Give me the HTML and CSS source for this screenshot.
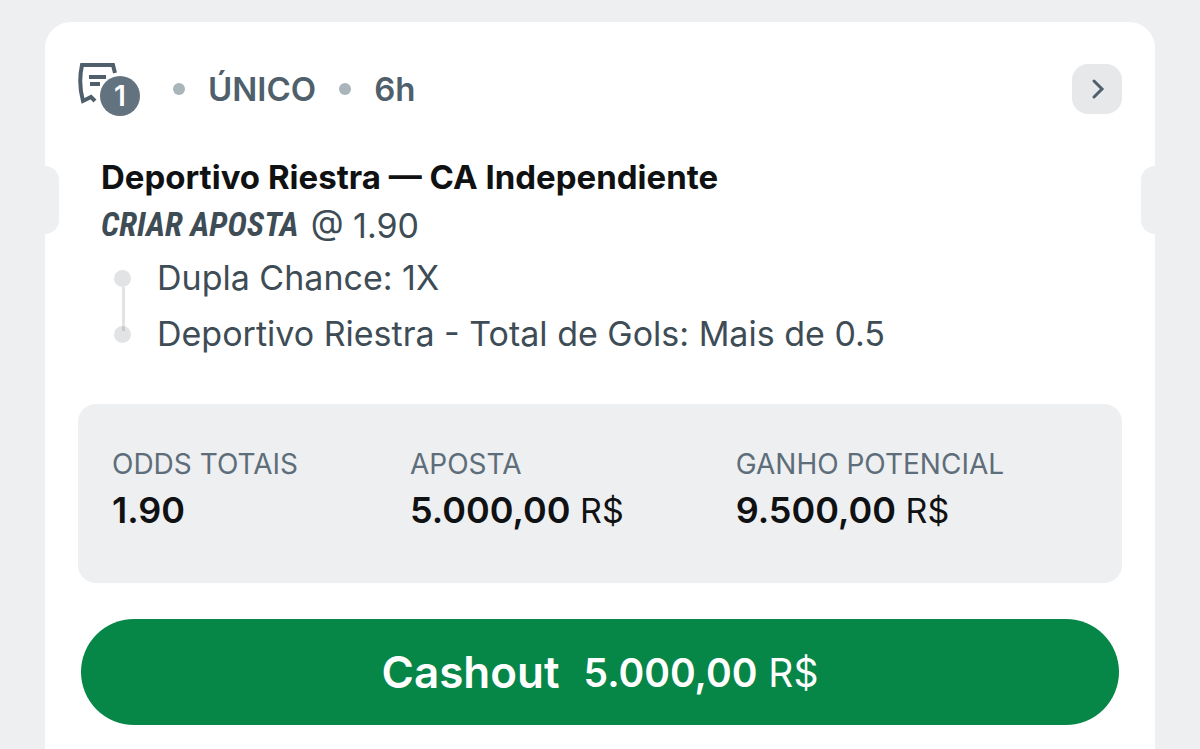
FILE: index.html
```
<!DOCTYPE html>
<html lang="pt-BR">
<head>
<meta charset="UTF-8" />
<meta name="viewport" content="width=device-width, initial-scale=1" />
<title>Aposta</title>
<link rel="stylesheet" href="styles.css">
</head>
<body>

<main class="ticket">
  <span class="notch notch-left"></span>
  <span class="notch notch-right"></span>

  <header class="ticket-head">
    <div class="slip">
      <svg class="slip-icon" viewBox="0 0 40 44" aria-hidden="true">
        <path d="M37 11L35 3H4Q0 21 5 39L13 35L17 39M11 15H28M12 22H22" />
      </svg>
      <span class="slip-count">1</span>
    </div>
    <span class="dot"></span>
    <span class="meta">ÚNICO</span>
    <span class="dot"></span>
    <span class="meta">6h</span>
    <button class="open-btn" type="button" aria-label="Abrir aposta">
      <svg viewBox="0 0 24 24" aria-hidden="true"><path d="M9 4l8 8-8 8" /></svg>
    </button>
  </header>

  <section class="event">
    <h1>Deportivo Riestra — CA Independiente</h1>
    <p class="builder"><strong>CRIAR APOSTA</strong> <span>@ 1.90</span></p>
    <ul class="legs">
      <li>Dupla Chance: 1X</li>
      <li>Deportivo Riestra - Total de Gols: Mais de 0.5</li>
    </ul>
  </section>

  <dl class="summary">
    <div>
      <dt>ODDS TOTAIS</dt>
      <dd><b>1.90</b></dd>
    </div>
    <div>
      <dt>APOSTA</dt>
      <dd><b>5.000,00</b> R$</dd>
    </div>
    <div>
      <dt>GANHO POTENCIAL</dt>
      <dd><b>9.500,00</b> R$</dd>
    </div>
  </dl>

  <button class="cashout" type="button">
    <span class="cashout-label">Cashout</span>
    <span class="cashout-value"><b>5.000,00</b> R$</span>
  </button>
</main>

</body>
</html>
```
FILE: styles.css
```
* { box-sizing: border-box; }
body {
  margin: 0;
  padding: 22px 45px 0;
  background: #eeeff1;
  color: #0f1113;
  font-family: Inter, "Liberation Sans", sans-serif;
}
.ticket {
  position: relative;
  min-height: calc(100vh - 22px);
  padding: 41px 33px 24px;
  background: #fff;
  border-radius: 26px 26px 0 0;
}
.notch {
  position: absolute;
  top: 144px;
  width: 14px;
  height: 68px;
  background: #eeeff1;
}
.notch-left {
  left: 0;
  border-radius: 0 14px 14px 0;
}
.notch-right {
  right: 0;
  border-radius: 14px 0 0 14px;
}
.ticket-head {
  display: flex;
  align-items: center;
  height: 52px;
  color: #4f5f6b;
}
.slip {
  position: relative;
  width: 62px;
  height: 54px;
}
.slip-icon {
  width: 40px;
  height: 44px;
  fill: none;
  stroke: #4f5f6b;
  stroke-width: 4;
}
.slip-count {
  position: absolute;
  right: 0;
  bottom: 0;
  width: 40px;
  height: 40px;
  border-radius: 50%;
  background: #62727f;
  box-shadow: 0 0 0 2px #fff;
  color: #fff;
  font-size: 28px;
  font-weight: 600;
  line-height: 40px;
  text-align: center;
}
.dot {
  width: 12px;
  height: 12px;
  margin: 0 23px 0 33px;
  border-radius: 50%;
  background: #aab4bb;
}
.meta {
  font-size: 33px;
  font-weight: 600;
}
.meta + .dot { margin: 0 23px; }
.open-btn {
  display: grid;
  place-items: center;
  width: 50px;
  height: 50px;
  margin-left: auto;
  padding: 0;
  border: 0;
  border-radius: 16px;
  background: #e6e8ea;
  cursor: pointer;
}
.open-btn svg {
  width: 24px;
  height: 24px;
  fill: none;
  stroke: #4f5f6b;
  stroke-width: 3;
  stroke-linecap: round;
}
.event { padding: 38px 23px 0; }
h1 {
  margin: 0;
  font-size: 33px;
  font-weight: 650;
  line-height: 48px;
}
.builder {
  display: flex;
  gap: 12px;
  margin: 0;
  color: #3e4c56;
  font-size: 34px;
  line-height: 48px;
}
.builder strong {
  font-family: "Roboto Condensed", "Liberation Sans Narrow", sans-serif;
  font-size: 33px;
  font-style: italic;
}
.builder span { padding-top: 1px; }
.legs {
  margin: 0;
  padding: 0;
  list-style: none;
}
.legs li {
  position: relative;
  padding-left: 56px;
  color: #3e4c56;
  font-size: 34px;
  line-height: 56px;
}
.legs li::before {
  content: "";
  position: absolute;
  left: 13px;
  top: 20px;
  width: 17px;
  height: 17px;
  border-radius: 50%;
  background: #e1e3e4;
}
.legs li:first-child::after {
  content: "";
  position: absolute;
  z-index: 1;
  left: 21px;
  top: 37px;
  width: 3px;
  height: 44px;
  background: rgba(60, 70, 75, 0.15);
}
.summary {
  display: flex;
  gap: 112px;
  margin: 42px 0 0;
  padding: 40px 34px 46px;
  border-radius: 18px;
  background: #eeeff1;
}
dt {
  color: #5d6d79;
  font-size: 28px;
  line-height: 40px;
}
dd {
  margin: 0;
  font-size: 34px;
  line-height: 52px;
}
dd b {
  font-size: 36px;
  font-weight: 600;
}
.cashout {
  display: flex;
  align-items: center;
  justify-content: center;
  gap: 24px;
  width: calc(100% - 6px);
  height: 106px;
  margin: 36px 3px 0;
  border: 0;
  border-radius: 53px;
  background: #068647;
  color: #fff;
  font-family: inherit;
  cursor: pointer;
}
.cashout-label {
  font-size: 44px;
  font-weight: 600;
}
.cashout-value { font-size: 39px; }
.cashout-value b { font-weight: 600; }
```
